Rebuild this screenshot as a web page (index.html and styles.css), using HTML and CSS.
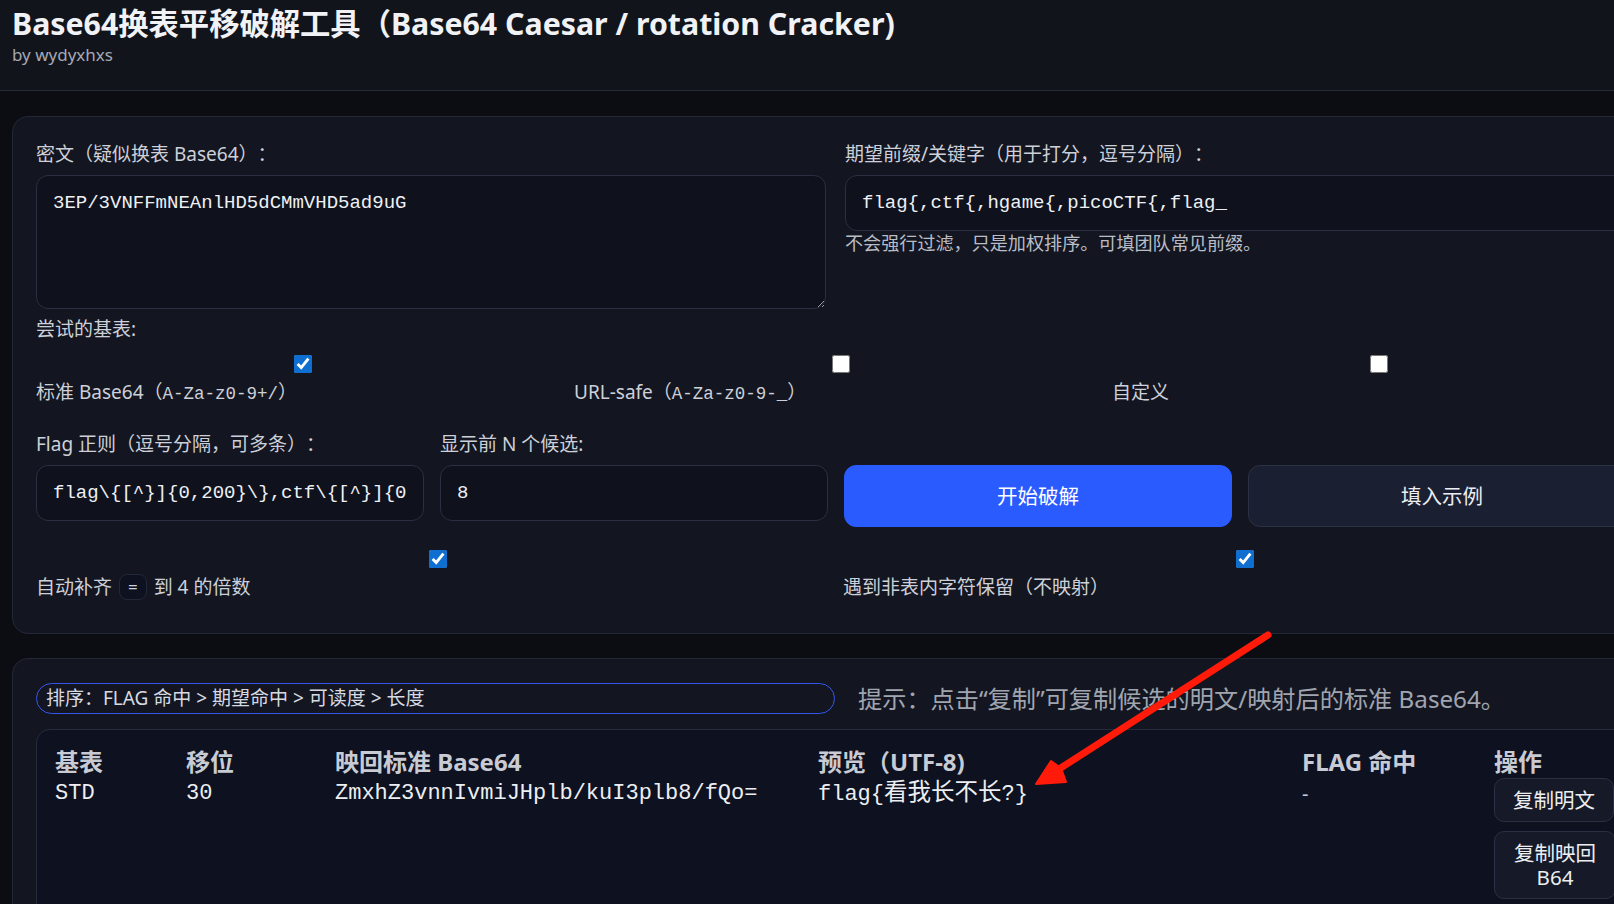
FILE: index.html
```html
<!DOCTYPE html>
<html lang="zh-CN">
<head>
<meta charset="utf-8">
<title>Base64换表平移破解工具</title>
<link rel="stylesheet" href="styles.css">
</head>
<body>
<header class="topbar">
  <h1 class="title">Base64换表平移破解工具（Base64 Caesar / rotation Cracker)</h1>
  <div class="byline">by wydyxhxs</div>
</header>

<main class="main">
  <section class="card card-form">
    <div class="row-two">
      <div class="field">
        <label class="label">密文（疑似换表 Base64）：</label>
        <textarea class="textarea mono">3EP/3VNFFmNEAnlHD5dCMmVHD5ad9uG</textarea>
      </div>
      <div class="field">
        <label class="label">期望前缀/关键字（用于打分，逗号分隔）：</label>
        <input class="input mono" type="text" value="flag{,ctf{,hgame{,picoCTF{,flag_">
        <div class="hint">不会强行过滤，只是加权排序。可填团队常见前缀。</div>
      </div>
    </div>

    <div class="label label-bases">尝试的基表:</div>
    <div class="row-three">
      <label class="check"><input type="checkbox" checked><span>标准 Base64（<code class="code">A-Za-z0-9+/</code>）</span></label>
      <label class="check"><input type="checkbox"><span>URL-safe（<code class="code">A-Za-z0-9-_</code>）</span></label>
      <label class="check"><input type="checkbox"><span>自定义</span></label>
    </div>

    <div class="row-four">
      <div class="field">
        <label class="label">Flag 正则（逗号分隔，可多条）：</label>
        <input class="input mono" type="text" value="flag\{[^}]{0,200}\},ctf\{[^}]{0,200}\}">
      </div>
      <div class="field">
        <label class="label">显示前 N 个候选:</label>
        <input class="input mono" type="text" value="8">
      </div>
      <div class="field">
        <span class="label spacer"></span>
        <button class="btn btn-primary" type="button">开始破解</button>
      </div>
      <div class="field">
        <span class="label spacer"></span>
        <button class="btn btn-secondary" type="button">填入示例</button>
      </div>
    </div>

    <div class="row-check">
      <label class="check"><input type="checkbox" checked><span>自动补齐 <code class="pad-chip">=</code> 到 4 的倍数</span></label>
      <label class="check"><input type="checkbox" checked><span>遇到非表内字符保留（不映射）</span></label>
    </div>
  </section>

  <section class="card card-results">
    <div class="sort-row">
      <div class="sort-pill">排序：FLAG 命中 &gt; 期望命中 &gt; 可读度 &gt; 长度</div>
      <div class="tip">提示：点击“复制”可复制候选的明文/映射后的标准 Base64。</div>
    </div>

    <div class="table-wrap">
      <table class="results">
        <colgroup>
          <col class="c-base">
          <col class="c-shift">
          <col class="c-b64">
          <col class="c-preview">
          <col class="c-flag">
          <col class="c-ops">
        </colgroup>
        <thead>
          <tr>
            <th>基表</th>
            <th>移位</th>
            <th>映回标准 Base64</th>
            <th>预览（UTF-8)</th>
            <th>FLAG 命中</th>
            <th>操作</th>
          </tr>
        </thead>
        <tbody>
          <tr>
            <td class="mono">STD</td>
            <td class="mono">30</td>
            <td class="mono">ZmxhZ3vnnIvmiJHplb/kuI3plb8/fQo=</td>
            <td class="mono">flag{<span class="cjk">看我长不长</span>?}</td>
            <td class="dash">-</td>
            <td class="ops">
              <button class="btn-copy" type="button">复制明文</button>
              <button class="btn-copy" type="button">复制映回 B64</button>
            </td>
          </tr>
        </tbody>
      </table>
    </div>
  </section>
</main>

<svg class="annotation" width="1614" height="904" viewBox="0 0 1614 904" aria-hidden="true">
  <line x1="1268" y1="635" x2="1056" y2="771" stroke="#ff1a0a" stroke-width="7" stroke-linecap="round"/>
  <polygon points="1036,784 1051,761 1061,768 1066,782" fill="#ff1a0a" stroke="#ff1a0a" stroke-width="2" stroke-linejoin="round"/>
</svg>
</body>
</html>
```

FILE: styles.css
```css
* {
  box-sizing: border-box;
}

html {
  overflow: hidden;
}

html,
body {
  margin: 0;
}

body {
  position: relative;
  width: 1614px;
  height: 904px;
  overflow: hidden;
  background: #0b0d12;
  color: #d2d5dc;
  font-family: "Noto Sans", "Noto Sans CJK SC", sans-serif;
  font-size: 19px;
  text-spacing-trim: space-all;
}

.mono,
.code {
  font-family: "Liberation Mono", "Noto Sans CJK SC", monospace;
}

/* ---------- header ---------- */
.topbar {
  height: 91px;
  padding: 5px 12px 0;
  background: #12141c;
  border-bottom: 1px solid #272b36;
}

.title {
  margin: 0;
  font-size: 30.3px;
  font-weight: 700;
  line-height: 38px;
  color: #f0f2f5;
  white-space: nowrap;
}

.byline {
  font-size: 17px;
  line-height: 24px;
  color: #a4a9b4;
}

/* ---------- layout ---------- */
.main {
  padding: 25px 0 0 12px;
}

.card {
  width: 1660px;
  background: #131621;
  border: 1px solid #232837;
  border-radius: 16px;
}

.card-form {
  padding: 23px 23px 32px;
}

.card-results {
  margin-top: 24px;
  padding: 24px 23px 23px;
}

.field {
  display: flex;
  flex-direction: column;
  min-width: 0;
}

.label {
  display: block;
  line-height: 28px;
  margin-bottom: 7px;
  color: #cdd0d8;
  white-space: nowrap;
}

.spacer {
  height: 28px;
}

.label-bases {
  margin: 6px 0 0;
}

.row-two {
  display: grid;
  grid-template-columns: 790px 1fr;
  column-gap: 19px;
}

.row-three {
  display: grid;
  grid-template-columns: repeat(3, 533px);
  column-gap: 5px;
  margin-top: 9px;
}

.row-four {
  display: grid;
  grid-template-columns: repeat(4, 388px);
  column-gap: 16px;
  margin-top: 22px;
  align-items: start;
}

.row-check {
  display: grid;
  grid-template-columns: repeat(2, 804px);
  column-gap: 3px;
  margin-top: 20px;
}

/* ---------- form controls ---------- */
.textarea,
.input {
  display: block;
  width: 100%;
  background: #0f121d;
  color: #eef0f4;
  border: 1px solid #2a2f41;
  border-radius: 12px;
  font-size: 19px;
  line-height: 26px;
  padding: 14px 16px;
  outline: none;
}

.textarea {
  height: 134px;
  resize: vertical;
}

.input {
  height: 56px;
  white-space: nowrap;
  overflow: hidden;
}

.hint {
  margin-top: 1px;
  font-size: 18.1px;
  line-height: 22px;
  color: #b9bdc6;
}

.check {
  display: block;
  color: #cdd0d8;
  line-height: 28px;
}

.check input {
  display: block;
  width: 18px;
  height: 18px;
  margin: 3px auto 5px;
  accent-color: #0e6fd0;
}

.check span {
  display: block;
  white-space: nowrap;
}

.code {
  font-size: 17.5px;
}

.pad-chip {
  display: inline-block;
  font-family: "Noto Sans", sans-serif;
  font-size: 17px;
  line-height: 24px;
  padding: 0 8px;
  margin: 0 2px;
  background: #0d1120;
  border: 1px solid #222839;
  border-radius: 8px;
  vertical-align: 1px;
  color: #cfd2da;
}

.btn {
  display: block;
  width: 100%;
  height: 62px;
  border-radius: 12px;
  font-family: "Noto Sans", "Noto Sans CJK SC", sans-serif;
  font-size: 20.5px;
  line-height: 26px;
  cursor: pointer;
}

.btn-primary {
  background: #2a5bff;
  border: 1px solid #2a5bff;
  color: #ffffff;
}

.btn-secondary {
  background: #1b1f32;
  border: 1px solid #2b3044;
  color: #eceef2;
}

/* ---------- results ---------- */
.sort-row {
  display: grid;
  grid-template-columns: 799px 1fr;
  align-items: center;
}

.sort-pill {
  height: 31px;
  border: 1.5px solid #3457ea;
  border-radius: 999px;
  padding: 0 9px;
  font-size: 19px;
  line-height: 28px;
  color: #d7dae1;
  white-space: nowrap;
}

.tip {
  padding-left: 23px;
  font-size: 24.2px;
  line-height: 31px;
  color: #a0a5b0;
  white-space: nowrap;
}

.table-wrap {
  margin-top: 15px;
  min-height: 200px;
  background: #0d1120;
  border: 1px solid #252b3d;
  border-radius: 14px;
  padding: 18px;
}

.results {
  table-layout: fixed;
  width: 1561px;
  border-collapse: collapse;
}

.c-base { width: 131px; }
.c-shift { width: 149px; }
.c-b64 { width: 483px; }
.c-preview { width: 484px; }
.c-flag { width: 192px; }
.c-ops { width: 122px; }

.results th {
  padding: 0;
  text-align: left;
  font-size: 24px;
  line-height: 28px;
  font-weight: 700;
  color: #c8cbd3;
  white-space: nowrap;
}

.results td {
  padding: 2px 0 0;
  vertical-align: top;
  font-size: 22px;
  line-height: 32px;
  color: #eceef2;
  white-space: nowrap;
}

.results td .cjk {
  font-size: 23.5px;
}

.results td.dash {
  font-size: 20px;
  color: #c8cbd3;
}

.results td.ops {
  white-space: normal;
}

.btn-copy {
  display: block;
  max-width: 100%;
  margin: 0 0 9px;
  padding: 9px 18px;
  background: #161a28;
  border: 1px solid #2a3044;
  border-radius: 10px;
  color: #eceef2;
  font-family: "Noto Sans", "Noto Sans CJK SC", sans-serif;
  font-size: 20.5px;
  line-height: 24px;
  text-align: center;
  cursor: pointer;
}

/* ---------- annotation overlay ---------- */
.annotation {
  position: absolute;
  top: 0;
  left: 0;
  pointer-events: none;
}
```
